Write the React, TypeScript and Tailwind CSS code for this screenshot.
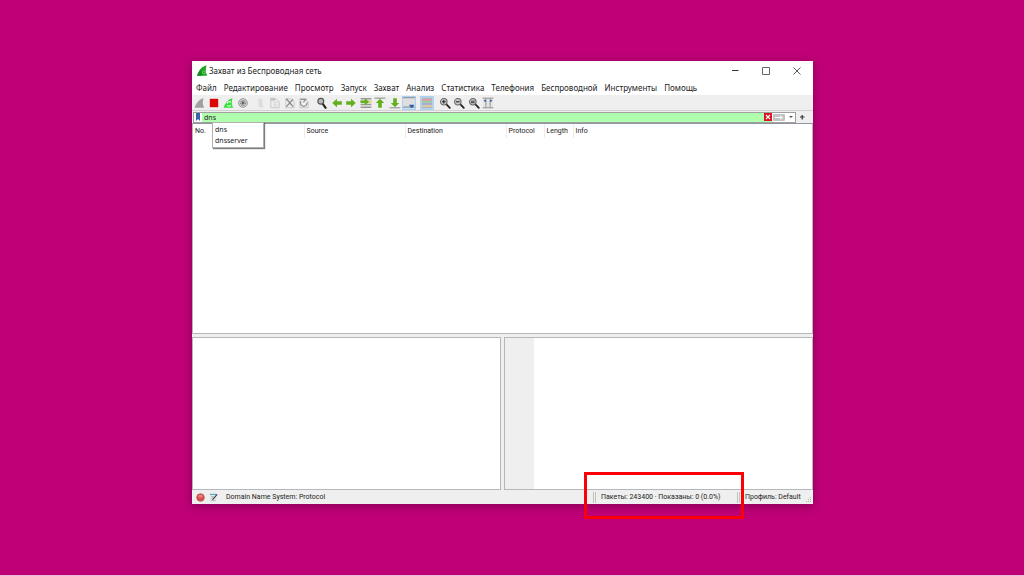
import type { ReactNode } from "react";

interface ToolProps {
  label: string;
  active?: boolean;
  children: ReactNode;
}

const Tool = ({ label, active, children }: ToolProps) => (
  <button
    type="button"
    aria-label={label}
    className={
      active
        ? "flex h-[14px] w-[14px] items-center justify-center bg-[#c5e0f7] ring-1 ring-inset ring-[#a9d2f5]"
        : "flex h-[14px] flex-1 items-center justify-center"
    }
  >
    <svg aria-hidden="true" viewBox="0 0 20 20" className="h-[12px] w-[12px]">
      {children}
    </svg>
  </button>
);

const Fin = ({ fill }: { fill: string }) => (
  <path d="M1 18C4 10 8 4 16 2C14 7 14 12 17 18Z" fill={fill} />
);

const arrowRight = "M2 7h8V3l8 7l-8 7v-4H2Z";
const arrowLeft = "M18 7h-8V3l-8 7l8 7v-4h8Z";

const Lens = ({ children }: { children?: ReactNode }) => (
  <>
    <path d="M12 12l6 6" stroke="#222" strokeWidth="3" strokeLinecap="round" />
    <circle cx="8" cy="8" r="5.4" fill="#c8c8c8" stroke="#666" strokeWidth="1.8" />
    {children}
  </>
);

const Sheet = () => <path d="M3 3h9l5 5v10H3Z" fill="#efefef" stroke="#c2c2c2" strokeWidth="1.4" />;

const menus = [
  "Файл",
  "Редактирование",
  "Просмотр",
  "Запуск",
  "Захват",
  "Анализ",
  "Статистика",
  "Телефония",
  "Беспроводной",
  "Инструменты",
  "Помощь",
];

const columns = [
  { name: "No.", width: "w-[111px]" },
  { name: "Source", width: "w-[101px]" },
  { name: "Destination", width: "w-[101px]" },
  { name: "Protocol", width: "w-[38px]" },
  { name: "Length", width: "w-[29px]" },
  { name: "Info", width: "w-auto" },
];

const TitleBar = () => (
  <header className="flex h-5 items-center pr-px pl-[5px]">
    <svg aria-hidden="true" viewBox="0 0 20 20" className="h-3 w-3">
      <path d="M0 18C3 9 7 3 16 1C14 7 14 12 17 18Z" fill="#1fa51f" />
      <path d="M0 18C2 14 4 10 7 7L8 18Z" fill="#178a22" />
      <circle cx="11.5" cy="12" r="3" fill="#62d862" />
      <circle cx="11.5" cy="12" r="1.3" fill="#0f7a1c" />
    </svg>
    <h1 className="flex-1 text-[8px] leading-[10px] text-[#222]">Захват из Беспроводная сеть</h1>
    <button type="button" aria-label="Свернуть" className="flex w-[31px] justify-center">
      <svg viewBox="0 0 8 8" className="h-2 w-2">
        <path d="M1 3.5h6.5" stroke="#333" strokeWidth="1" />
      </svg>
    </button>
    <button type="button" aria-label="Развернуть" className="flex w-[31px] justify-center">
      <svg viewBox="0 0 8 8" className="h-2 w-2">
        <path d="M0.500 0.500h7v7h-7Z" fill="none" stroke="#555" strokeWidth="0.9" />
      </svg>
    </button>
    <button type="button" aria-label="Закрыть" className="flex w-[31px] justify-center">
      <svg viewBox="0 0 8 8" className="h-2 w-2">
        <path d="M0.500 0.500l7 7M7.500 0.500l-7 7" stroke="#444" strokeWidth="0.9" />
      </svg>
    </button>
  </header>
);

const Toolbar = () => (
  <div role="toolbar" className="flex h-[15px] items-center gap-1 bg-[#efefef] pl-px">
    <div className="flex w-[57px]">
      <Tool label="Начать захват">
        <Fin fill="#a0a0a0" />
      </Tool>
      <Tool label="Остановить захват">
        <rect x="3" y="3" width="14" height="14" fill="#dc0505" />
      </Tool>
      <Tool label="Перезапустить захват">
        <Fin fill="#34e034" />
        <path d="M7 11a3.4 3.4 0 0 1 6-2M13 13a3.4 3.4 0 0 1-6 1" fill="none" stroke="#f4fff4" strokeWidth="1.8" />
      </Tool>
      <Tool label="Параметры захвата">
        <circle cx="10" cy="10" r="7.2" fill="#d8d8d8" stroke="#8d8d8d" strokeWidth="1.5" />
        <circle cx="10" cy="10" r="3.8" fill="none" stroke="#888" strokeWidth="2.4" strokeDasharray="2 1" />
        <circle cx="10" cy="10" r="2.4" fill="#666" />
      </Tool>
    </div>
    <div className="flex w-[57px]">
      <Tool label="Открыть файл">
        <path d="M6 3h6v10l3 4H6Z" fill="#dcdcdc" />
      </Tool>
      <Tool label="Сохранить файл">
        <Sheet />
        <path d="M3 2h7v4H3ZM7 9h7M7 12h7M7 15h7" fill="#c4c4c4" stroke="#c4c4c4" />
      </Tool>
      <Tool label="Закрыть файл">
        <Sheet />
        <path d="M4 3l11 13M15 4L4 16" stroke="#888" strokeWidth="2.2" />
      </Tool>
      <Tool label="Перечитать файл">
        <Sheet />
        <path d="M5 7a5.500 5.500 0 1 0 10 2M4 4h9L9 9" fill="none" stroke="#909090" strokeWidth="2" />
      </Tool>
    </div>
    <div className="flex w-[101px]">
      <Tool label="Найти пакет">
        <path d="M11 11l5 7" stroke="#222" strokeWidth="3.4" strokeLinecap="round" />
        <circle cx="8" cy="7" r="4.8" fill="#bdbdbd" stroke="#555" strokeWidth="2" />
      </Tool>
      <Tool label="Предыдущий пакет">
        <path d={arrowLeft} fill="#62b01e" />
      </Tool>
      <Tool label="Следующий пакет">
        <path d={arrowRight} fill="#62b01e" />
      </Tool>
      <Tool label="Перейти к пакету">
        <path d="M1 3h18M1 7.5h18M1 12.5h18M1 17h18" stroke="#999" strokeWidth="2.6" />
        <path d="M10 8h9" stroke="#e6df6a" strokeWidth="3" />
        <path d="M1 6h7V2l7 6l-7 6v-4H1Z" fill="#62b01e" />
      </Tool>
      <Tool label="Первый пакет">
        <path d="M1 2h18" stroke="#999" strokeWidth="2" />
        <path d="M10 3l7 7h-4v8H7v-8H3Z" fill="#62b01e" />
      </Tool>
      <Tool label="Последний пакет">
        <path d="M1 18h18" stroke="#999" strokeWidth="2" />
        <path d="M10 17l7-7h-4V2H7v8H3Z" fill="#62b01e" />
      </Tool>
      <Tool label="Автопрокрутка" active>
        <path d="M0 1h20v14H0Z" fill="#dedede" />
        <path d="M0 1h20M0 17h20" stroke="#9a9a9a" strokeWidth="2" />
        <path d="M10 13h9l-3 5h-3Z" fill="#2f5fa8" />
      </Tool>
    </div>
    <div className="flex">
      <Tool label="Раскрасить пакеты" active>
        <path d="M1 2h18M1 18h18" stroke="#a0a0a0" strokeWidth="1.6" />
        <path d="M1 5h18" stroke="#e58a8a" strokeWidth="2.4" />
        <path d="M1 8.3h18" stroke="#83c98a" strokeWidth="2.4" />
        <path d="M1 11.6h18" stroke="#a594cf" strokeWidth="2.4" />
        <path d="M1 15h18" stroke="#e0bf7e" strokeWidth="2.4" />
      </Tool>
    </div>
    <div className="flex w-[57px]">
      <Tool label="Увеличить">
        <Lens>
          <path d="M5 8h6M8 5v6" stroke="#222" strokeWidth="1.8" />
        </Lens>
      </Tool>
      <Tool label="Уменьшить">
        <Lens>
          <path d="M5 8h6" stroke="#222" strokeWidth="1.8" />
        </Lens>
      </Tool>
      <Tool label="Обычный размер">
        <Lens>
          <path d="M5 7h6M5 9.5h6" stroke="#222" strokeWidth="1.4" />
        </Lens>
      </Tool>
      <Tool label="Ширина столбцов">
        <path d="M2 2h16v15H2Z" fill="#e4e4e4" />
        <path d="M1 2h18M1 18h18" stroke="#888" strokeWidth="1.6" />
        <path d="M6.500 3v14M13.500 3v14" stroke="#888" strokeWidth="1.4" />
        <path d="M3 6l3-1v3ZM17 6l-3-1v3Z" fill="#2f5fa8" stroke="#2f5fa8" />
      </Tool>
    </div>
  </div>
);

const FilterBar = () => (
  <div className="flex h-[13px] items-center border-t border-[#d2d2d2] bg-[#efefef] pl-px">
    <div className="relative flex h-[11px] flex-1 items-center border border-[#a0a0a0] bg-white">
      <button type="button" aria-label="Закладки фильтров" className="flex w-2 justify-center">
        <svg viewBox="0 0 6 8" className="h-2 w-[6px]">
          <path d="M1 0h4v8L3 6L1 8Z" fill="#3a66a7" />
        </svg>
      </button>
      <input
        aria-label="Фильтр отображения"
        defaultValue="dns"
        className="h-full min-w-0 flex-1 bg-[#afffaf] pl-[2px] text-[7px] leading-[9px] text-[#222] outline-none"
      />
      <button type="button" aria-label="Очистить" className="flex h-full w-[9px] items-center justify-center bg-[#afffaf]">
        <svg viewBox="0 0 8 8" className="h-[8px] w-[8px]">
          <path d="M0 0h8v8H0Z" fill="#d8121f" />
          <path d="M2 2l4 4M6 2L2 6" stroke="#fff" strokeWidth="1.1" />
        </svg>
      </button>
      <button type="button" aria-label="Применить" className="flex w-[14px] justify-center">
        <svg viewBox="0 0 12 7" className="h-[7px] w-[12px]">
          <rect width="12" height="7" rx="1" fill="#c3c3c3" />
          <path d="M2 3h5V1.500L10 3.500L7 5.500V4H2Z" fill="#fff" />
        </svg>
      </button>
      <button type="button" aria-label="Недавние фильтры" className="flex w-[9px] justify-center">
        <svg viewBox="0 0 6 4" className="h-1 w-[6px]">
          <path d="M1 1h4L3 3Z" fill="#555" />
        </svg>
      </button>
      <ul className="absolute left-[18px] top-[9px] z-10 w-[52px] border border-[#b0b0b0] bg-white py-px pl-[2px] text-[7px] leading-[11px] text-[#222] shadow-[1px_1px_1px_rgba(70,70,70,0.7)]">
        <li>dns</li>
        <li>dnsserver</li>
      </ul>
    </div>
    <button type="button" aria-label="Добавить кнопку фильтра" className="flex w-[17px] justify-center pr-[6px]">
      <svg viewBox="0 0 6 6" className="h-[6px] w-[6px]">
        <path d="M1 3h4.500M3.200 1v4.500" stroke="#333" strokeWidth="1.2" />
      </svg>
    </button>
  </div>
);

const Handle = () => <span className="h-[11px] w-[3px] border-x border-[#c2c2c2]" />;

const StatusBar = () => (
  <footer className="flex h-[14px] items-center bg-[#efefef] font-['Roboto','Noto_Sans',sans-serif] text-[7px] leading-[10px] text-[#222]">
    <button type="button" aria-label="Экспертная информация" className="ml-1">
      <svg viewBox="0 0 10 10" className="h-[9px] w-[9px]">
        <circle cx="5" cy="5" r="4.200" fill="#de5050" stroke="#a34a4a" strokeWidth="0.8" />
        <ellipse cx="5" cy="3.500" rx="2.500" ry="1.500" fill="#ec8080" />
      </svg>
    </button>
    <button type="button" aria-label="Комментарий к захвату" className="ml-1">
      <svg viewBox="0 0 10 10" className="h-[9px] w-[9px]">
        <path d="M1 1h7v8H1Z" fill="#dfe5e8" />
        <path d="M1 1.500h7" stroke="#4ba0c4" strokeWidth="1.200" />
        <path d="M2.500 4h3M2.500 6h2M2 8.500h5" stroke="#9aa7ad" strokeWidth="0.8" />
        <path d="M4 7.500L9 1.500" stroke="#333" strokeWidth="1.200" />
      </svg>
    </button>
    <p className="ml-2 flex-1">Domain Name System: Protocol</p>
    <div className="relative flex w-[144px] items-center gap-[5px] whitespace-nowrap">
      <Handle />
      <p>Пакеты: 243400 · Показаны: 0 (0.0%)</p>
      <div className="absolute -left-[9px] -top-5 h-[47px] w-[160px] border-[3px] border-[#fb0007]" />
    </div>
    <Handle />
    <p className="ml-[5px] w-[60px] whitespace-nowrap">Профиль: Default</p>
    <svg aria-hidden="true" viewBox="0 0 7 7" className="mt-1 mr-px h-[7px] w-[7px]">
      <path d="M5 1h1v1H5ZM5 3h1v1H5ZM5 5h1v1H5ZM3 3h1v1H3ZM3 5h1v1H3ZM1 5h1v1H1Z" fill="#b0b0b0" />
    </svg>
  </footer>
);

export default function App() {
  return (
    <main className="min-h-screen border-b border-[#ecb8da] bg-[#bf0077] pt-[61px] pr-[211px] pb-[70px] pl-[192px] font-['Noto_Sans','Open_Sans',sans-serif]">
      <div className="bg-white shadow-[0_2px_8px_rgba(60,0,40,0.45)]">
        <TitleBar />
        <nav className="flex h-[14px] items-center gap-[7px] pl-1 text-[8px] leading-[10px] text-[#222]">
          {menus.map((menu) => (
            <button key={menu} type="button">
              {menu}
            </button>
          ))}
        </nav>
        <Toolbar />
        <FilterBar />
        <section className="h-[211px] border border-t-[#8f959c] border-[#b4b7bb] bg-white">
          <table className="w-full table-fixed text-left font-['Roboto','Noto_Sans',sans-serif] text-[7px] leading-[14px] text-[#222]">
            <thead>
              <tr>
                {columns.map(({ name, width }) => (
                  <th key={name} scope="col" className={`${width} border-r border-[#ececec] pl-[2px] font-normal last:border-r-0`}>
                    {name}
                  </th>
                ))}
              </tr>
            </thead>
          </table>
        </section>
        <div className="grid grid-cols-2 gap-[3px] bg-[#efefef] pt-[3px]">
          <section className="h-[153px] border border-[#b4b7bb] bg-white" />
          <section className="flex h-[153px] border border-[#b4b7bb] bg-white">
            <div className="w-[29px] bg-[#efefef]" />
          </section>
        </div>
        <StatusBar />
      </div>
    </main>
  );
}
